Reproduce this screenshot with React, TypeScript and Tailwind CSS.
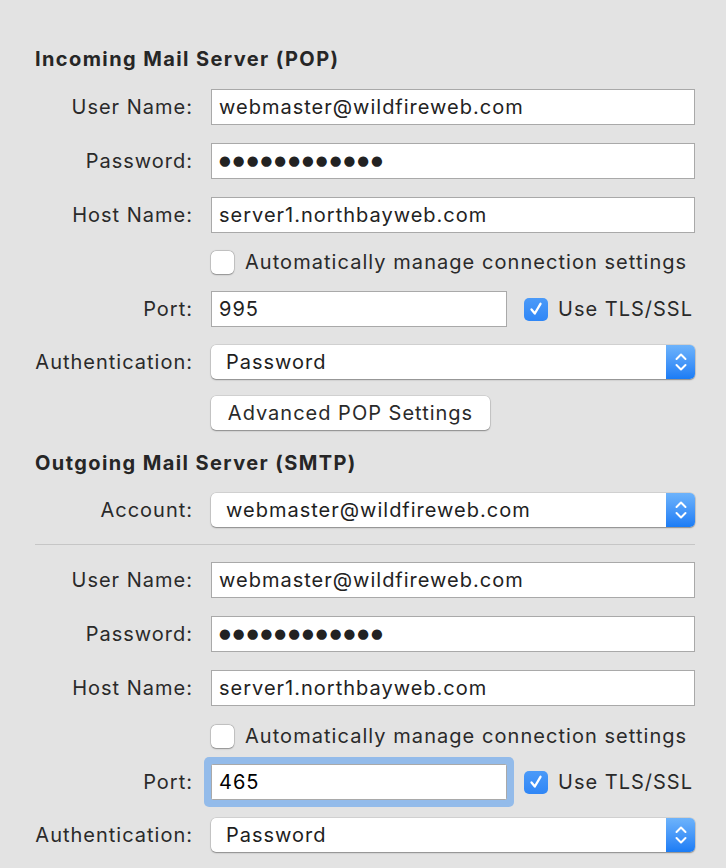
import React from 'react';

const font = { fontFamily: 'Inter, "Noto Sans", sans-serif' };

const Label: React.FC<{ text: string }> = ({ text }) => (
  <div className="w-[158px] shrink-0 text-right text-[20px] tracking-[1px] text-[#2a2a2a] leading-none whitespace-nowrap">{text}</div>
);

const TextField: React.FC<{ value: string; focused?: boolean; className?: string }> = ({ value, focused, className }) => (
  <div
    className={
      'h-[36px] bg-white border border-[#a9a9a9] flex items-center pl-[7px] text-[20px] tracking-[1px] leading-none ' +
      (focused
        ? 'rounded-[1.5px] shadow-[0_0_0_7px_#93bbea] text-black '
        : 'text-[#222] ') +
      (className ?? 'flex-1')
    }
  >
    {value}
  </div>
);

const PasswordField: React.FC = () => (
  <div className="flex-1 h-[36px] bg-white border border-[#a9a9a9] flex items-center pl-[7px]">
    <span
      className="text-[13.5px] tracking-[2.05px] text-[#222] leading-none"
      style={{ fontFamily: '"DejaVu Sans", sans-serif' }}
    >
      ●●●●●●●●●●●●
    </span>
  </div>
);

const Chevrons: React.FC = () => (
  <svg width="14" height="22" viewBox="0 0 14 22" fill="none">
    <path d="M2.5 8 L7 3.5 L11.5 8" stroke="white" strokeWidth="2" strokeLinecap="round" strokeLinejoin="round" />
    <path d="M2.5 14 L7 18.5 L11.5 14" stroke="white" strokeWidth="2" strokeLinecap="round" strokeLinejoin="round" />
  </svg>
);

const Select: React.FC<{ value: string }> = ({ value }) => (
  <div className="flex-1 h-[34px] bg-white rounded-[5px] flex items-stretch shadow-[0_0_0_0.5px_rgba(0,0,0,0.15),0_1px_1.5px_rgba(0,0,0,0.35)]">
    <div className="flex-1 flex items-center pl-[15px] text-[20px] tracking-[1px] text-[#1e1e1e] leading-none">{value}</div>
    <div className="w-[29px] rounded-r-[5px] bg-gradient-to-b from-[#6db3fb] to-[#1a7cf5] flex items-center justify-center">
      <Chevrons />
    </div>
  </div>
);

const Checkbox: React.FC<{ checked?: boolean }> = ({ checked }) =>
  checked ? (
    <div className="w-[24px] h-[23px] rounded-[5px] bg-gradient-to-b from-[#4b9af8] to-[#2f86f6] flex items-center justify-center">
      <svg width="16" height="16" viewBox="0 0 16 16" fill="none">
        <path d="M3.5 8.5 L6.8 12.5 L12.5 2.8" stroke="white" strokeWidth="2.3" strokeLinecap="round" strokeLinejoin="round" />
      </svg>
    </div>
  ) : (
    <div className="w-[23px] h-[23px] rounded-[5px] bg-white shadow-[0_0_0_0.5px_rgba(0,0,0,0.2),0_0.5px_1.5px_rgba(0,0,0,0.3)]" />
  );

const Row: React.FC<{ label?: string; className?: string; children: React.ReactNode }> = ({ label, className, children }) => (
  <div className={'flex items-center ' + (className ?? '')}>
    <Label text={label ?? ''} />
    <div className="ml-[18px] flex-1 flex items-center">{children}</div>
  </div>
);

const Heading: React.FC<{ text: string; className?: string }> = ({ text, className }) => (
  <div className={'h-[24px] flex items-center text-[20px] tracking-[1.4px] font-bold text-[#262626] whitespace-nowrap ' + (className ?? '')}>{text}</div>
);

export default function App() {
  return (
    <div className="w-[726px] h-[868px] overflow-hidden bg-[#e3e3e3] pl-[35px] pr-[31px] pt-[47px]" style={font}>
      <Heading text="Incoming Mail Server (POP)" />

      <Row label="User Name:" className="mt-[18px] h-[36px]">
        <TextField value="webmaster@wildfireweb.com" />
      </Row>
      <Row label="Password:" className="mt-[18px] h-[36px]">
        <PasswordField />
      </Row>
      <Row label="Host Name:" className="mt-[18px] h-[36px]">
        <TextField value="server1.northbayweb.com" />
      </Row>
      <Row className="mt-[17px] h-[24px]">
        <Checkbox />
        <span className="ml-[11px] text-[20px] tracking-[1.05px] text-[#2a2a2a] leading-none whitespace-nowrap">Automatically manage connection settings</span>
      </Row>
      <Row label="Port:" className="mt-[17px] h-[36px]">
        <TextField value="995" className="w-[296px]" />
        <div className="ml-[17px]">
          <Checkbox checked />
        </div>
        <span className="ml-[10px] text-[20px] tracking-[1px] text-[#2a2a2a] leading-none whitespace-nowrap">Use TLS/SSL</span>
      </Row>
      <Row label="Authentication:" className="mt-[18px] h-[34px]">
        <Select value="Password" />
      </Row>
      <Row className="mt-[17px] h-[34px]">
        <button className="h-[34px] w-[279px] bg-white rounded-[5px] text-[20px] tracking-[1px] text-[#2a2a2a] leading-none whitespace-nowrap shadow-[0_0_0_0.5px_rgba(0,0,0,0.15),0_1px_1.5px_rgba(0,0,0,0.35)]">
          Advanced POP Settings
        </button>
      </Row>

      <Heading text="Outgoing Mail Server (SMTP)" className="mt-[21px]" />

      <Row label="Account:" className="mt-[18px] h-[34px]">
        <Select value="webmaster@wildfireweb.com" />
      </Row>

      <div className="mt-[17px] h-px bg-[#c6c6c6]" />

      <Row label="User Name:" className="mt-[17px] h-[36px]">
        <TextField value="webmaster@wildfireweb.com" />
      </Row>
      <Row label="Password:" className="mt-[18px] h-[36px]">
        <PasswordField />
      </Row>
      <Row label="Host Name:" className="mt-[18px] h-[36px]">
        <TextField value="server1.northbayweb.com" />
      </Row>
      <Row className="mt-[18px] h-[24px]">
        <Checkbox />
        <span className="ml-[11px] text-[20px] tracking-[1.05px] text-[#2a2a2a] leading-none whitespace-nowrap">Automatically manage connection settings</span>
      </Row>
      <Row label="Port:" className="mt-[16px] h-[36px]">
        <TextField value="465" focused className="w-[296px]" />
        <div className="ml-[17px]">
          <Checkbox checked />
        </div>
        <span className="ml-[10px] text-[20px] tracking-[1px] text-[#2a2a2a] leading-none whitespace-nowrap">Use TLS/SSL</span>
      </Row>
      <Row label="Authentication:" className="mt-[18px] h-[34px]">
        <Select value="Password" />
      </Row>
    </div>
  );
}
